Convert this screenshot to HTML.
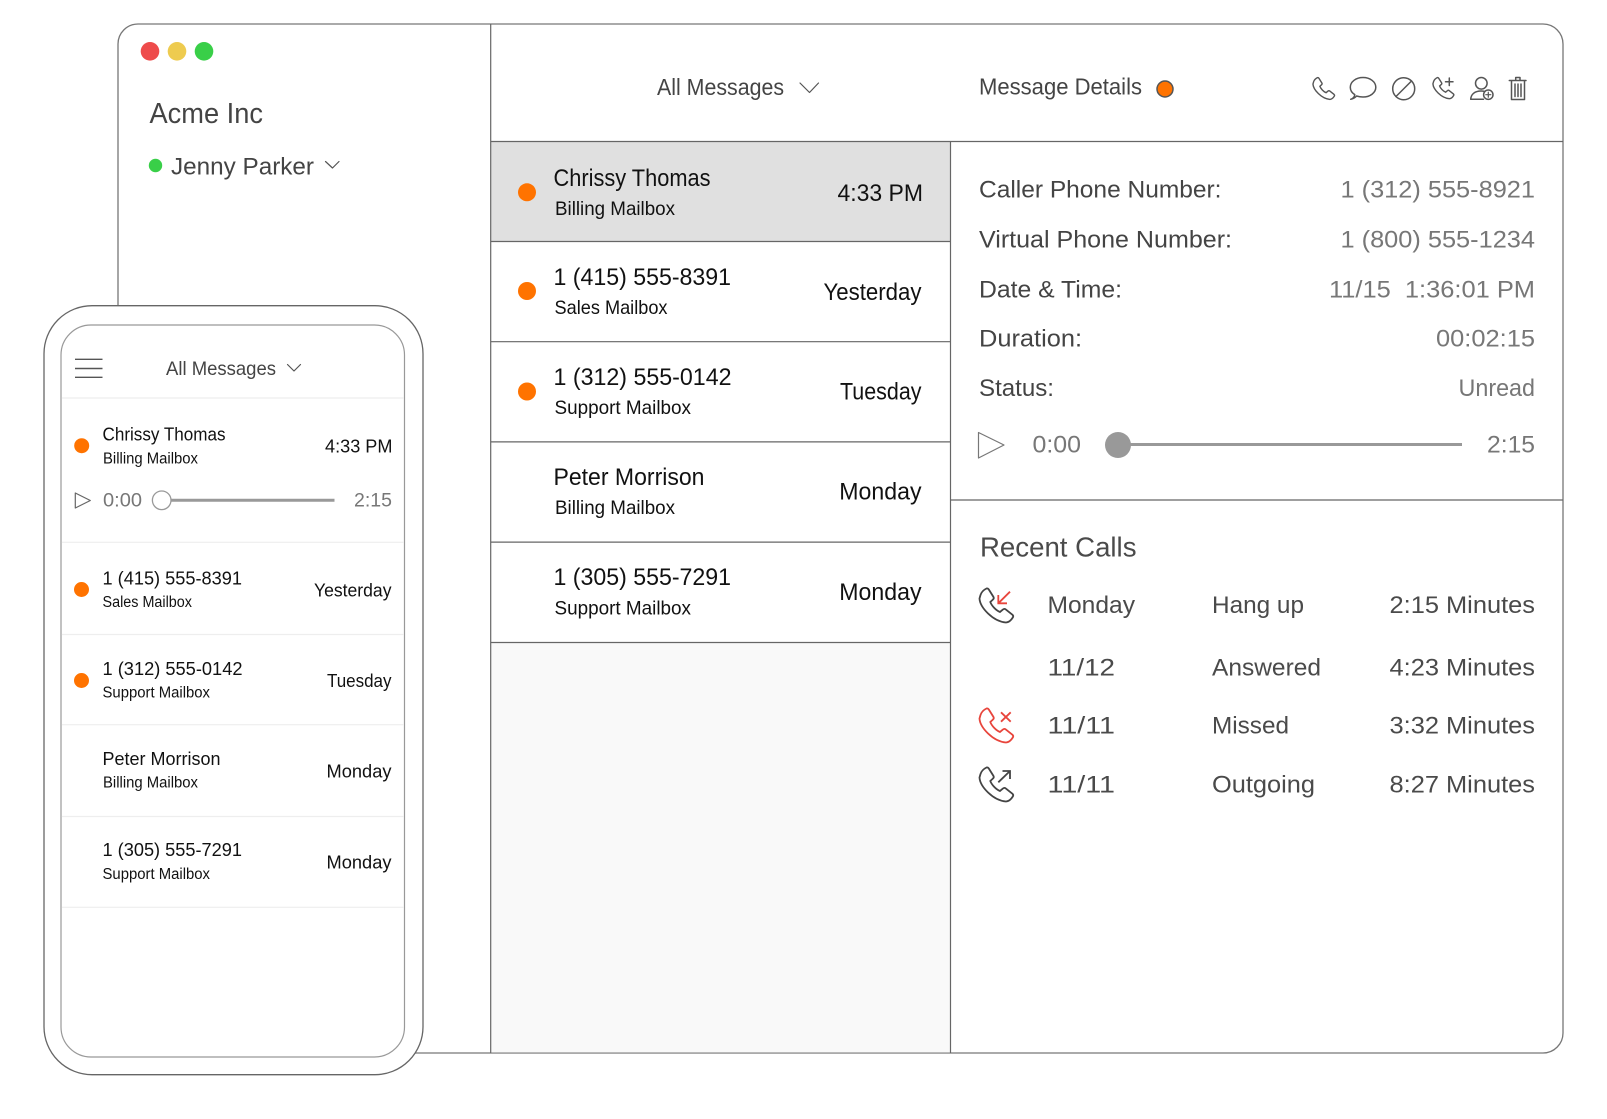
<!DOCTYPE html>
<html><head><meta charset="utf-8"><title>Acme Inc</title>
<style>
html,body{margin:0;padding:0;background:#fff;width:1607px;height:1119px;overflow:hidden}
svg{display:block}
text{font-family:"Liberation Sans",sans-serif}
.h{fill:#444}
.n{font-size:24px;fill:#111}
.s{font-size:19.5px;fill:#111}
.t{font-size:24px;fill:#111}
.l{font-size:24px;fill:#444}
.v{font-size:24px;fill:#777}
.c{font-size:24px;fill:#4a4a4a}
.pn{font-size:18.5px;fill:#111}
.ps{font-size:15.5px;fill:#111}
.pt{font-size:18.5px;fill:#111}
.ic{fill:none;stroke:#555;stroke-width:1.5;stroke-linecap:round;stroke-linejoin:round}
</style></head><body>
<svg width="1607" height="1119" viewBox="0 0 1607 1119" xmlns="http://www.w3.org/2000/svg">
<defs>
<path id="ph" d="M2.5 7.5C3.5 4.5 6 2.2 8.5 1C9.5.7 10.3 1.2 10.8 2L15.5 9.5C16 10.5 15.8 11.3 15 12L12.3 14.5C13.5 18 18 23 22 24.5L25 22C25.800 21.3 26.800 21.200 27.600 21.800L34.500 27.300C35.300 28 35.400 29 34.800 30C33 33 30.500 34.800 28 35C15 34 2 20 1.500 11Z"/>
</defs>

<!-- window -->
<rect x="118" y="24" width="1445" height="1029" rx="20" fill="#fff" stroke="#777" stroke-width="1.3"/>
<rect x="491" y="642.500" width="459.500" height="410" fill="#f9f9f9"/>
<rect x="491" y="141.500" width="459.500" height="100" fill="#e0e0e0"/>
<g stroke="#666" stroke-width="1.2" fill="none">
<path d="M490.700 24V1053"/>
<path d="M950.500 141.500V1053"/>
<path d="M490.700 141.500H1563"/>
<path d="M490.700 241.500H950.500M490.700 341.700H950.500M490.700 441.900H950.500M490.700 542.100H950.500M490.700 642.500H950.500"/>
<path d="M950.500 500H1563"/>
</g>
<circle cx="150" cy="51.300" r="9.300" fill="#ee4b4b"/>
<circle cx="177" cy="51.300" r="9.300" fill="#eecb4f"/>
<circle cx="204" cy="51.300" r="9.300" fill="#39cf48"/>
<text class="h" x="149.500" y="123" font-size="29" textLength="113.500" lengthAdjust="spacingAndGlyphs">Acme Inc</text>
<circle cx="155.500" cy="165.500" r="6.700" fill="#39cf48"/>
<text class="h" x="171" y="174.700" font-size="24" textLength="143" lengthAdjust="spacingAndGlyphs">Jenny Parker</text>
<path class="ic" style="stroke-width:1.2" d="M325.500 161.500L332.500 168L339 161.500"/>

<!-- header -->
<text class="h" x="657" y="95" font-size="23.500" textLength="127" lengthAdjust="spacingAndGlyphs">All Messages</text>
<path class="ic" style="stroke-width:1.2" d="M800 83L809.500 92.500L818.500 83"/>
<text class="h" x="979" y="94.500" font-size="23.500" textLength="163" lengthAdjust="spacingAndGlyphs">Message Details</text>
<circle cx="1165" cy="89" r="8" fill="#ff7300" stroke="#555" stroke-width="1.500"/>

<!-- header icons -->
<use href="#ph" transform="translate(1312 77) scale(.64)" style="fill:none;stroke:#555;stroke-width:2.200"/>
<path class="ic" d="M1350.700 99.300C1354 98.500 1355.500 97.500 1356.500 96C1358.500 96.600 1360.500 97 1363 97C1370 97 1375.800 92.800 1375.800 87.300C1375.800 81.800 1370 77.500 1363 77.500C1356 77.500 1350.300 81.800 1350.300 87.300C1350.300 90.300 1352 93 1354.800 94.700C1354.500 96.800 1353 98.500 1350.700 99.300Z"/>
<circle class="ic" cx="1403.700" cy="88.700" r="11"/>
<path class="ic" d="M1396 96.500L1411.500 81"/>
<use href="#ph" transform="translate(1432 77) scale(.62)" style="fill:none;stroke:#555;stroke-width:2.300"/>
<path class="ic" d="M1449.300 78V85.500M1445.500 81.700H1453"/>
<circle class="ic" cx="1481.300" cy="83.300" r="5.800"/>
<path class="ic" d="M1483.500 99.300H1470.700C1471 94 1475 91 1481 91C1482.500 91 1483.800 91.200 1485 91.500"/>
<circle class="ic" cx="1488.300" cy="94.700" r="4.700"/>
<path class="ic" style="stroke-width:1.200" d="M1488.300 92.200V97.200M1485.800 94.700H1490.800"/>
<path class="ic" d="M1509.300 80.500H1526M1515.700 80V77.500H1520V80M1511.500 81V99.500H1524.500V81M1515 84V96.500M1518 84V96.500M1521 84V96.500"/>

<!-- list rows -->
<circle cx="527" cy="192.300" r="9" fill="#ff7300"/>
<text class="n" x="553.500" y="186" textLength="157" lengthAdjust="spacingAndGlyphs">Chrissy Thomas</text>
<text class="s" x="555" y="215" textLength="120" lengthAdjust="spacingAndGlyphs">Billing Mailbox</text>
<text class="t" x="837.500" y="201" textLength="85.500" lengthAdjust="spacingAndGlyphs">4:33 PM</text>

<circle cx="527" cy="291" r="9" fill="#ff7300"/>
<text class="n" x="553.500" y="285" textLength="177.500" lengthAdjust="spacingAndGlyphs">1 (415) 555-8391</text>
<text class="s" x="554.500" y="314" textLength="113" lengthAdjust="spacingAndGlyphs">Sales Mailbox</text>
<text class="t" x="823.500" y="300" textLength="98" lengthAdjust="spacingAndGlyphs">Yesterday</text>

<circle cx="527" cy="391.500" r="9" fill="#ff7300"/>
<text class="n" x="553.500" y="385" textLength="178" lengthAdjust="spacingAndGlyphs">1 (312) 555-0142</text>
<text class="s" x="554.500" y="414" textLength="136.500" lengthAdjust="spacingAndGlyphs">Support Mailbox</text>
<text class="t" x="840" y="399.300" textLength="81.500" lengthAdjust="spacingAndGlyphs">Tuesday</text>

<text class="n" x="553.500" y="485" textLength="151" lengthAdjust="spacingAndGlyphs">Peter Morrison</text>
<text class="s" x="555" y="514" textLength="120" lengthAdjust="spacingAndGlyphs">Billing Mailbox</text>
<text class="t" x="839.300" y="499.700" textLength="82.200" lengthAdjust="spacingAndGlyphs">Monday</text>

<text class="n" x="553.500" y="585" textLength="177.500" lengthAdjust="spacingAndGlyphs">1 (305) 555-7291</text>
<text class="s" x="554.500" y="614.500" textLength="136.500" lengthAdjust="spacingAndGlyphs">Support Mailbox</text>
<text class="t" x="839.300" y="600" textLength="82.200" lengthAdjust="spacingAndGlyphs">Monday</text>

<!-- details -->
<text class="l" x="979" y="197.700" textLength="242.500" lengthAdjust="spacingAndGlyphs">Caller Phone Number:</text>
<text class="l" x="979" y="247.600" textLength="253" lengthAdjust="spacingAndGlyphs">Virtual Phone Number:</text>
<text class="l" x="979" y="297.300" textLength="143" lengthAdjust="spacingAndGlyphs">Date &amp; Time:</text>
<text class="l" x="979" y="346.700" textLength="103" lengthAdjust="spacingAndGlyphs">Duration:</text>
<text class="l" x="979" y="396" textLength="75" lengthAdjust="spacingAndGlyphs">Status:</text>
<text class="v" x="1340.500" y="197.700" textLength="194.500" lengthAdjust="spacingAndGlyphs">1 (312) 555-8921</text>
<text class="v" x="1340.500" y="247.600" textLength="194.500" lengthAdjust="spacingAndGlyphs">1 (800) 555-1234</text>
<text class="v" x="1329" y="297.300" textLength="206" lengthAdjust="spacingAndGlyphs" xml:space="preserve">11/15  1:36:01 PM</text>
<text class="v" x="1436" y="346.700" textLength="99" lengthAdjust="spacingAndGlyphs">00:02:15</text>
<text class="v" x="1458.500" y="396" textLength="76.500" lengthAdjust="spacingAndGlyphs">Unread</text>

<path d="M978.500 432.500V458L1004 445Z" fill="none" stroke="#777" stroke-width="1.200" stroke-linejoin="round"/>
<text class="v" x="1032.500" y="452.700" textLength="48.500" lengthAdjust="spacingAndGlyphs">0:00</text>
<path d="M1110 444.500H1462" stroke="#999" stroke-width="3"/>
<circle cx="1118" cy="445" r="13" fill="#999"/>
<text class="v" x="1487" y="452.700" textLength="48" lengthAdjust="spacingAndGlyphs">2:15</text>

<!-- recent calls -->
<text x="980" y="556.500" font-size="28" fill="#4a4a4a" textLength="156.500" lengthAdjust="spacingAndGlyphs">Recent Calls</text>
<use href="#ph" transform="translate(978 587.500)" style="fill:none;stroke:#444;stroke-width:1.800"/>
<path fill="none" stroke="#e8453c" stroke-width="1.800" d="M1010 591.700L998.300 603.300M998.300 595V603.300H1007"/>
<use href="#ph" transform="translate(978 707.500)" style="fill:none;stroke:#e8453c;stroke-width:1.800"/>
<path fill="none" stroke="#e8453c" stroke-width="1.800" d="M1001 712.300L1010.700 721.700M1010.700 712.300L1001 721.700"/>
<use href="#ph" transform="translate(978 766.500)" style="fill:none;stroke:#444;stroke-width:1.800"/>
<path fill="none" stroke="#444" stroke-width="1.800" d="M998.300 782.300L1010 771M1002.500 771H1010V779"/>

<text class="c" x="1047.500" y="613" textLength="87.500" lengthAdjust="spacingAndGlyphs">Monday</text>
<text class="c" x="1047.500" y="675.700" textLength="67.500" lengthAdjust="spacingAndGlyphs">11/12</text>
<text class="c" x="1047.500" y="733.300" textLength="67.500" lengthAdjust="spacingAndGlyphs">11/11</text>
<text class="c" x="1047.500" y="792.300" textLength="67.500" lengthAdjust="spacingAndGlyphs">11/11</text>
<text class="c" x="1212" y="613" textLength="92" lengthAdjust="spacingAndGlyphs">Hang up</text>
<text class="c" x="1212" y="675.700" textLength="109" lengthAdjust="spacingAndGlyphs">Answered</text>
<text class="c" x="1212" y="733.300" textLength="77" lengthAdjust="spacingAndGlyphs">Missed</text>
<text class="c" x="1212" y="792.300" textLength="103" lengthAdjust="spacingAndGlyphs">Outgoing</text>
<text class="c" x="1389.500" y="613" textLength="145.500" lengthAdjust="spacingAndGlyphs">2:15 Minutes</text>
<text class="c" x="1389.500" y="675.700" textLength="145.500" lengthAdjust="spacingAndGlyphs">4:23 Minutes</text>
<text class="c" x="1389.500" y="733.300" textLength="145.500" lengthAdjust="spacingAndGlyphs">3:32 Minutes</text>
<text class="c" x="1389.500" y="792.300" textLength="145.500" lengthAdjust="spacingAndGlyphs">8:27 Minutes</text>

<!-- phone -->
<rect x="44" y="305.700" width="379" height="769" rx="48" fill="#fff" stroke="#666" stroke-width="1.300"/>
<rect x="61" y="325" width="343.500" height="732" rx="30" fill="#fff" stroke="#999" stroke-width="1.200"/>
<path d="M75 359.300H102.500M75 368.500H102.500M75 377.300H102.500" stroke="#555" stroke-width="1.400"/>
<text class="h" x="166" y="375" font-size="19.500" textLength="110" lengthAdjust="spacingAndGlyphs">All Messages</text>
<path class="ic" style="stroke-width:1.200" d="M287.500 364.500L294 371L300.500 364.500"/>
<path d="M61.500 398H404M61.500 542.300H404M61.500 634.500H404M61.500 724.700H404M61.500 816.500H404M61.500 907.300H404" stroke="#eee" stroke-width="1.200"/>

<circle cx="81.700" cy="445.700" r="7.500" fill="#ff7300"/>
<text class="pn" x="102.500" y="440.700" textLength="123" lengthAdjust="spacingAndGlyphs">Chrissy Thomas</text>
<text class="ps" x="103" y="463.300" textLength="95" lengthAdjust="spacingAndGlyphs">Billing Mailbox</text>
<text class="pt" x="325" y="452.700" textLength="67.500" lengthAdjust="spacingAndGlyphs">4:33 PM</text>
<path d="M75.300 493V508L90.300 500.500Z" fill="none" stroke="#666" stroke-width="1.200" stroke-linejoin="round"/>
<text x="103" y="506.700" font-size="19.500" fill="#777" textLength="39" lengthAdjust="spacingAndGlyphs">0:00</text>
<path d="M170 500.300H334.500" stroke="#999" stroke-width="3"/>
<circle cx="161.700" cy="500.300" r="9.300" fill="#fff" stroke="#999" stroke-width="1.300"/>
<text x="354" y="506.700" font-size="19.500" fill="#777" textLength="38" lengthAdjust="spacingAndGlyphs">2:15</text>

<circle cx="81.500" cy="589.500" r="7.500" fill="#ff7300"/>
<text class="pn" x="102.500" y="584.500" textLength="139.500" lengthAdjust="spacingAndGlyphs">1 (415) 555-8391</text>
<text class="ps" x="102.500" y="607" textLength="89.500" lengthAdjust="spacingAndGlyphs">Sales Mailbox</text>
<text class="pt" x="314" y="596.300" textLength="77.500" lengthAdjust="spacingAndGlyphs">Yesterday</text>

<circle cx="81.500" cy="680.500" r="7.500" fill="#ff7300"/>
<text class="pn" x="102.500" y="675" textLength="140" lengthAdjust="spacingAndGlyphs">1 (312) 555-0142</text>
<text class="ps" x="102.500" y="697.500" textLength="107.500" lengthAdjust="spacingAndGlyphs">Support Mailbox</text>
<text class="pt" x="327" y="686.800" textLength="64.500" lengthAdjust="spacingAndGlyphs">Tuesday</text>

<text class="pn" x="102.500" y="764.800" textLength="118" lengthAdjust="spacingAndGlyphs">Peter Morrison</text>
<text class="ps" x="103" y="787.500" textLength="95" lengthAdjust="spacingAndGlyphs">Billing Mailbox</text>
<text class="pt" x="326.500" y="777.300" textLength="65" lengthAdjust="spacingAndGlyphs">Monday</text>

<text class="pn" x="102.500" y="856" textLength="139.500" lengthAdjust="spacingAndGlyphs">1 (305) 555-7291</text>
<text class="ps" x="102.500" y="879" textLength="107.500" lengthAdjust="spacingAndGlyphs">Support Mailbox</text>
<text class="pt" x="326.500" y="868.300" textLength="65" lengthAdjust="spacingAndGlyphs">Monday</text>
</svg>
</body></html>
